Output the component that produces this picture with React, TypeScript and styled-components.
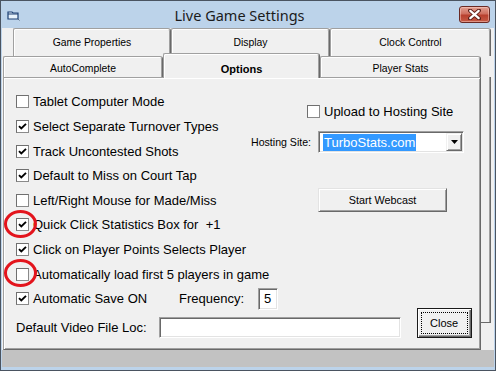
import React from "react";
import styled, { createGlobalStyle } from "styled-components";

const GlobalStyle = createGlobalStyle`
  html, body {
    margin: 0;
    padding: 0;
    background: #ffffff;
  }
  body {
    font-family: "Liberation Sans", Arial, sans-serif;
    color: #000;
  }
`;

const leftChecks = [
	{ label: "Tablet Computer Mode", checked: false },
	{ label: "Select Separate Turnover Types", checked: true },
	{ label: "Track Uncontested Shots", checked: true },
	{ label: "Default to Miss on Court Tap", checked: true },
	{ label: "Left/Right Mouse for Made/Miss", checked: false },
	{ label: "Quick Click Statistics Box for  +1", checked: true, marked: true },
	{ label: "Click on Player Points Selects Player", checked: true },
	{ label: "Automatically load first 5 players in game", checked: false, marked: true },
];

function CheckBox({ checked }: { checked: boolean }) {
	return (
		<Box>
			{checked && (
				<svg width="9" height="9" viewBox="0 0 9 9">
					<path d="M1 4.2 L3.3 6.5 L8 1.8" fill="none" stroke="#000" strokeWidth="1.9" />
				</svg>
			)}
		</Box>
	);
}

export default function App() {
	return (
		<>
			<GlobalStyle />
			<Window>
				<TitleBar>
					<AppIcon width="13" height="11" viewBox="0 0 13 11">
						<path d="M1 2 H5 L6 3 H11 V9 H1 Z" fill="#e8f2fb" stroke="#1c3f73" strokeWidth="1.2" />
						<path d="M1 4 H11" stroke="#1c3f73" strokeWidth="1" />
						<path d="M11 9 L12.5 10.5" stroke="#5a6b80" strokeWidth="1" />
					</AppIcon>
					<Title>Live Game Settings</Title>
					<CloseBtn>
						<svg width="13" height="11" viewBox="0 0 13 11">
							<path d="M2 1.5 L11 9.5 M11 1.5 L2 9.5" stroke="#5a1d17" strokeWidth="4" strokeLinecap="round" />
							<path d="M2.3 1.8 L10.7 9.2 M10.7 1.8 L2.3 9.2" stroke="#fff" strokeWidth="2.2" strokeLinecap="round" />
						</svg>
					</CloseBtn>
				</TitleBar>
				<Client>
					<BackRow>
						<Tab $width={158}>Game Properties</Tab>
						<Tab $width={159}>Display</Tab>
						<Tab $width={161}>Clock Control</Tab>
					</BackRow>
					<FrontRow>
						<Tab $width={160}>AutoComplete</Tab>
						<Tab $width={157} $active>Options</Tab>
						<Tab $width={161}>Player Stats</Tab>
					</FrontRow>
					<PageArea>
						<Panel>
							<TopSection>
								<CheckList>
									{leftChecks.map((c) => (
										<CheckRow key={c.label} $marked={c.marked}>
											<CheckBox checked={c.checked} />
											<CheckLabel>{c.label}</CheckLabel>
										</CheckRow>
									))}
								</CheckList>
								<SidePanel>
									<UploadRow>
										<CheckBox checked={false} />
										<CheckLabel>Upload to Hosting Site</CheckLabel>
									</UploadRow>
									<HostingRow>
										<SmallLabel>Hosting Site:</SmallLabel>
										<Combo>
											<ComboText>
												<Selected>TurboStats.com</Selected>
											</ComboText>
											<DropButton>
												<svg width="7" height="4" viewBox="0 0 7 4">
													<path d="M0 0 H7 L3.5 4 Z" fill="#000" />
												</svg>
											</DropButton>
										</Combo>
									</HostingRow>
									<WebcastButton>Start Webcast</WebcastButton>
								</SidePanel>
							</TopSection>
							<BottomSection>
								<BottomFields>
									<SaveRow>
										<CheckRow $width={163}>
											<CheckBox checked />
											<CheckLabel>Automatic Save ON</CheckLabel>
										</CheckRow>
										<CheckLabel>Frequency:</CheckLabel>
										<TextField $width={20}>5</TextField>
									</SaveRow>
									<VideoRow>
										<CheckLabel>Default Video File Loc:</CheckLabel>
										<TextField $width={242} />
									</VideoRow>
								</BottomFields>
								<CloseButton>Close</CloseButton>
							</BottomSection>
						</Panel>
						<BackEdge />
					</PageArea>
					<FormFooter />
				</Client>
			</Window>
		</>
	);
}

const Window = styled.div`
    width: 496px;
    height: 371px;
    box-sizing: border-box;
    border: 1px solid #4a5461;
    background: #bcd3ea;
    display: flex;
    flex-direction: column;
    padding: 0 1px 3px 1px;
`;

const TitleBar = styled.div`
    height: 27px;
    display: flex;
    align-items: center;
    padding: 0 4px 0 5px;
    flex: none;
`;

const AppIcon = styled.svg`
    flex: none;
    margin-top: 1px;
`;

const Title = styled.div`
    flex: 1;
    text-align: center;
    font-family: "Noto Sans", "Open Sans", sans-serif;
    font-size: 14.5px;
    color: #1b1b1b;
    padding-top: 1px;
`;

const CloseBtn = styled.div`
    width: 31px;
    height: 17px;
    box-sizing: border-box;
    margin-top: -1px;
    border: 1px solid #6a2a24;
    border-radius: 3px;
    background: linear-gradient(#e2a092 0%, #cf6f5f 45%, #b8402e 55%, #c65a45 100%);
    box-shadow: inset 0 0 0 1px rgba(255, 220, 210, 0.45);
    display: flex;
    align-items: center;
    justify-content: center;
`;

const Client = styled.div`
    flex: 1;
    display: flex;
    flex-direction: column;
    background: #f0f0f0;
    padding-left: 1px;
`;

const BackRow = styled.div`
    height: 28px;
    display: flex;
    padding-left: 10px;
    flex: none;
`;

const FrontRow = styled.div`
    height: 21px;
    display: flex;
    flex: none;
`;

const Tab = styled.div<{ $width: number; $active?: boolean }>`
    width: ${(p) => p.$width}px;
    height: ${(p) => (p.$active ? 25 : 28)}px;
    margin-top: ${(p) => (p.$active ? -3 : 0)}px;
    box-sizing: border-box;
    flex: none;
    position: relative;
    z-index: ${(p) => (p.$active ? 2 : 0)};
    background: #f0f0f0;
    border-top: 1px solid #a0a0a0;
    border-left: 1px solid #a0a0a0;
    border-right: 1px solid #696969;
    border-top-right-radius: 3px;
    border-top-left-radius: 2px;
    box-shadow: inset 1px 1px 0 #ffffff, inset -1px 0 0 #a0a0a0;
    display: flex;
    justify-content: center;
    padding-top: 8px;
    font-size: ${(p) => (p.$active ? 11 : 10.4)}px;
    font-weight: ${(p) => (p.$active ? 700 : 400)};
    ${FrontRow} > & {
        height: ${(p) => (p.$active ? 25 : 21)}px;
        padding-top: ${(p) => (p.$active ? 9 : 6)}px;
    }
`;

const PageArea = styled.div`
    display: flex;
    align-items: flex-start;
    height: 273px;
    flex: none;
`;

const Panel = styled.div`
    width: 478px;
    height: 273px;
    box-sizing: border-box;
    position: relative;
    border-top: 1px solid #a0a0a0;
    border-left: 1px solid #a0a0a0;
    border-right: 1px solid #696969;
    border-bottom: 1px solid #696969;
    box-shadow: inset 1px 1px 0 #ffffff, inset -1px -1px 0 #a0a0a0;
    padding: 11.7px 0 0 12px;
`;

const BackEdge = styled.div`
    width: 10px;
    height: 246px;
    box-sizing: border-box;
    border-right: 1px solid #696969;
    border-bottom: 1px solid #696969;
    box-shadow: inset -1px 0 0 #a0a0a0;
`;

const FormFooter = styled.div`
    flex: 1;
    background: #c2c2c2;
    margin-left: -1px;
`;

const TopSection = styled.div`
    display: flex;
`;

const CheckList = styled.div`
    width: 235px;
    display: flex;
    flex-direction: column;
`;

const CheckRow = styled.div<{ $marked?: boolean; $width?: number }>`
    height: 24.6px;
    display: flex;
    align-items: center;
    gap: 4px;
    position: relative;
    white-space: nowrap;
    ${(p) => (p.$width ? `width: ${p.$width}px; flex: none;` : "")}
    ${(p) =>
		p.$marked
			? `&::before {
        content: "";
        position: absolute;
        left: -12px;
        top: 50%;
        width: 33px;
        height: 28px;
        margin-top: -15px;
        box-sizing: border-box;
        border: 3.5px solid #e3141c;
        border-radius: 50%;
        z-index: 3;
    }`
			: ""}
`;

const Box = styled.div`
    width: 13px;
    height: 13px;
    box-sizing: border-box;
    flex: none;
    background: #fff;
    border: 1px solid #8a8a8a;
    border-top-color: #6f6f6f;
    border-left-color: #6f6f6f;
    display: flex;
    align-items: center;
    justify-content: center;
`;

const CheckLabel = styled.span`
    font-size: 13px;
    white-space: pre;
`;

const SmallLabel = styled.span`
    font-size: 10.6px;
    white-space: nowrap;
`;

const SidePanel = styled.div`
    display: flex;
    flex-direction: column;
    align-items: flex-start;
`;

const UploadRow = styled.div`
    height: 24.6px;
    margin-top: 10px;
    padding-left: 56px;
    display: flex;
    align-items: center;
    gap: 4px;
`;

const HostingRow = styled.div`
    display: flex;
    align-items: center;
    margin-top: 7px;
    ${SmallLabel} {
        width: 67px;
        flex: none;
    }
`;

const Combo = styled.div`
    width: 146px;
    height: 22px;
    box-sizing: border-box;
    background: #fff;
    border: 1px solid;
    border-color: #a0a0a0 #ffffff #ffffff #a0a0a0;
    box-shadow: inset 1px 1px 0 #696969, inset -1px -1px 0 #e3e3e3;
    display: flex;
    align-items: center;
    padding: 0 1px 0 4px;
`;

const ComboText = styled.div`
    flex: 1;
    display: flex;
`;

const Selected = styled.span`
    background: #3399ff;
    color: #fff;
    font-size: 13px;
    line-height: 17px;
    padding: 0 1px;
`;

const DropButton = styled.div`
    width: 16px;
    height: 18px;
    box-sizing: border-box;
    background: #f0f0f0;
    border: 1px solid;
    border-color: #f0f0f0 #696969 #696969 #f0f0f0;
    box-shadow: inset 1px 1px 0 #ffffff, inset -1px -1px 0 #a0a0a0;
    display: flex;
    align-items: center;
    justify-content: center;
`;

const WebcastButton = styled.div`
    margin-top: 35px;
    margin-left: 67px;
    width: 129px;
    height: 24px;
    box-sizing: border-box;
    background: #f0f0f0;
    border: 1px solid;
    border-color: #e3e3e3 #696969 #696969 #e3e3e3;
    box-shadow: inset 1px 1px 0 #ffffff, inset -1px -1px 0 #a0a0a0;
    font-size: 10.8px;
    display: flex;
    align-items: center;
    justify-content: center;
`;

const BottomSection = styled.div`
    display: flex;
    align-items: flex-end;
`;

const BottomFields = styled.div`
    display: flex;
    flex-direction: column;
`;

const SaveRow = styled.div`
    display: flex;
    align-items: center;
    height: 24.6px;
`;

const VideoRow = styled.div`
    display: flex;
    align-items: center;
    gap: 12px;
    margin-top: 6px;
`;

const TextField = styled.div<{ $width: number }>`
    width: ${(p) => p.$width}px;
    height: ${(p) => (p.$width < 40 ? 22 : 21)}px;
    box-sizing: border-box;
    background: #fff;
    border: 1px solid;
    border-color: #a0a0a0 #ffffff #ffffff #a0a0a0;
    box-shadow: inset 1px 1px 0 #696969, inset -1px -1px 0 #e3e3e3;
    font-size: 13px;
    line-height: 20px;
    padding-left: 5px;
    margin-left: ${(p) => (p.$width < 40 ? 14 : 0)}px;
`;

const CloseButton = styled.div`
    width: 55px;
    height: 30px;
    margin-left: 16px;
    box-sizing: border-box;
    position: relative;
    background: #f0f0f0;
    border: 1px solid #1a1a1a;
    box-shadow: inset 1px 1px 0 #ffffff, inset -1px -1px 0 #696969, inset -2px -2px 0 #a0a0a0;
    font-size: 11px;
    display: flex;
    align-items: center;
    justify-content: center;
    &::after {
        content: "";
        position: absolute;
        inset: 3px;
        border: 1px dotted #000;
    }
`;
